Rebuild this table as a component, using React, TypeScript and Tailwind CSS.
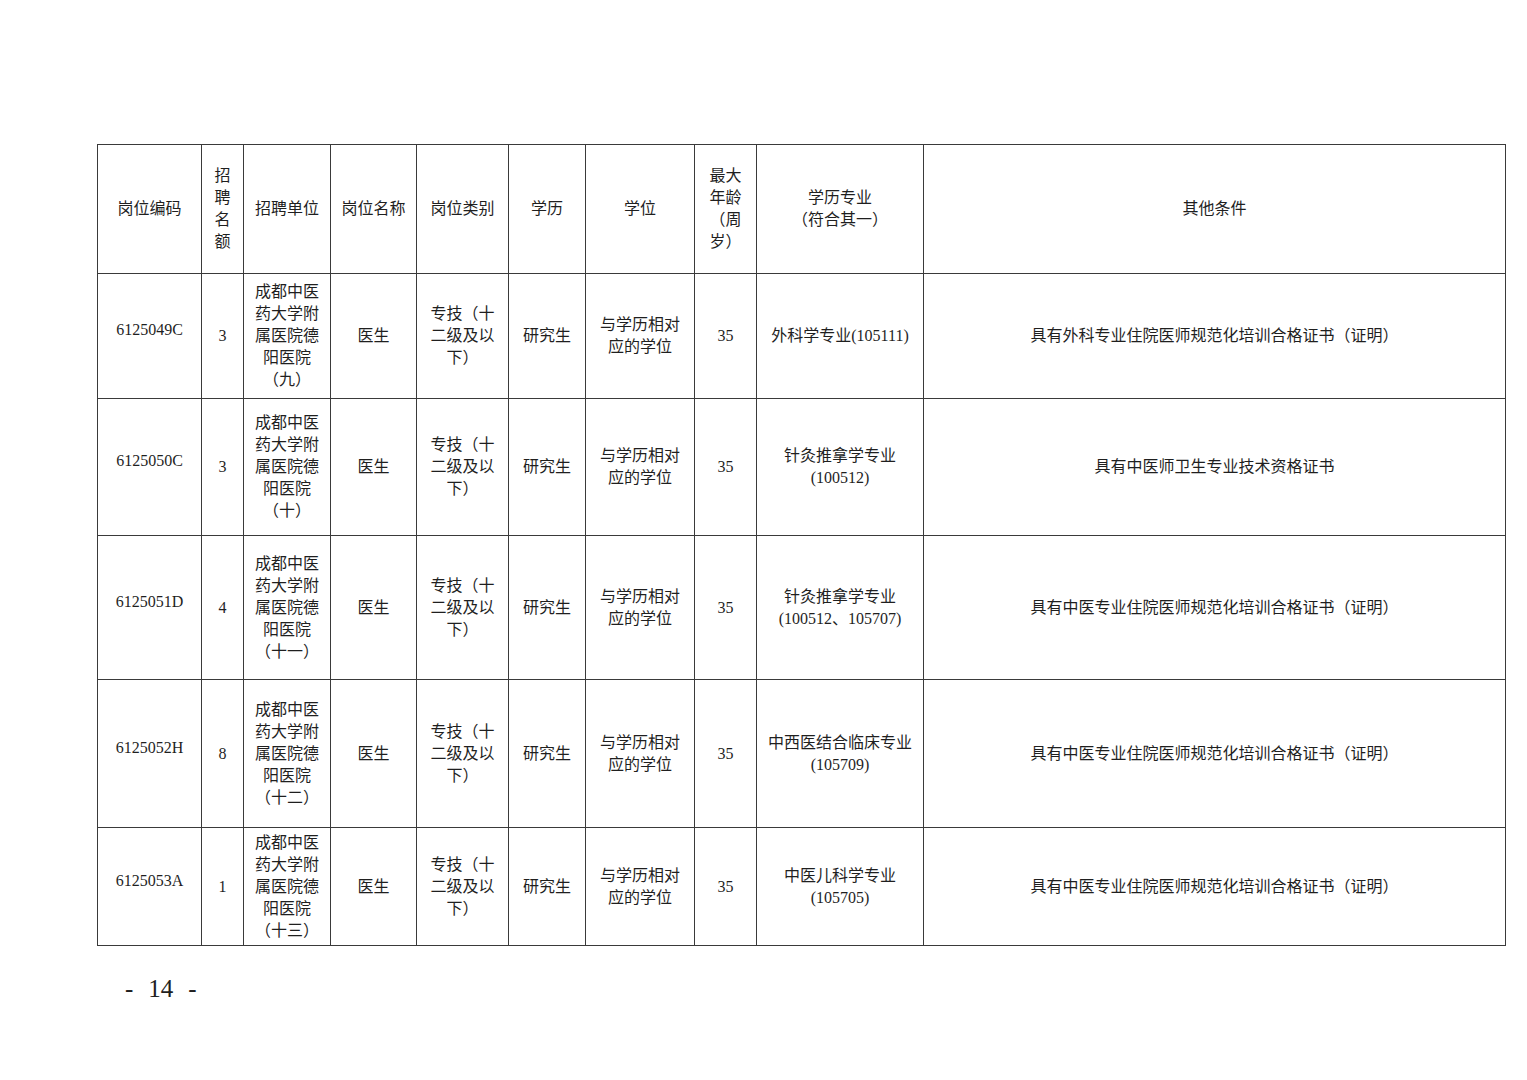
const rows = [
  { code: "6125049C", num: "3", unit: "（九）", major: ["外科学专业(105111)"], other: "具有外科专业住院医师规范化培训合格证书（证明）", h: "h-[125px]" },
  { code: "6125050C", num: "3", unit: "（十）", major: ["针灸推拿学专业", "(100512)"], other: "具有中医师卫生专业技术资格证书", h: "h-[137px]" },
  { code: "6125051D", num: "4", unit: "（十一）", major: ["针灸推拿学专业", "(100512、105707)"], other: "具有中医专业住院医师规范化培训合格证书（证明）", h: "h-[144px]" },
  { code: "6125052H", num: "8", unit: "（十二）", major: ["中西医结合临床专业", "(105709)"], other: "具有中医专业住院医师规范化培训合格证书（证明）", h: "h-[148px]" },
  { code: "6125053A", num: "1", unit: "（十三）", major: ["中医儿科学专业", "(105705)"], other: "具有中医专业住院医师规范化培训合格证书（证明）", h: "h-[118px]" }
];

const cell = "border border-[#3a3a3a] px-1 text-center align-middle";

export default function App() {
  return (
    <div
      className="w-[1527px] h-[1080px] bg-white text-[#1f1f1f] text-[16px] leading-[22px] pt-[144px] pl-[97px]"
      style={{ fontFamily: '"Liberation Serif", "Noto Sans CJK SC", serif' }}
    >
      <table className="table-fixed border-collapse w-[1408px]">
        <colgroup>
          <col className="w-[104px]" />
          <col className="w-[42px]" />
          <col className="w-[87px]" />
          <col className="w-[86px]" />
          <col className="w-[92px]" />
          <col className="w-[77px]" />
          <col className="w-[109px]" />
          <col className="w-[62px]" />
          <col className="w-[167px]" />
          <col className="w-[582px]" />
        </colgroup>
        <thead>
          <tr className="h-[129px]">
            <th className={`${cell} font-normal`}>岗位编码</th>
            <th className={`${cell} font-normal`}>招<br />聘<br />名<br />额</th>
            <th className={`${cell} font-normal`}>招聘单位</th>
            <th className={`${cell} font-normal`}>岗位名称</th>
            <th className={`${cell} font-normal`}>岗位类别</th>
            <th className={`${cell} font-normal`}>学历</th>
            <th className={`${cell} font-normal`}>学位</th>
            <th className={`${cell} font-normal`}>最大<br />年龄<br />（周<br />岁）</th>
            <th className={`${cell} font-normal`}>学历专业<br />（符合其一）</th>
            <th className={`${cell} font-normal`}>其他条件</th>
          </tr>
        </thead>
        <tbody>
          {rows.map((r) => (
            <tr key={r.code} className={r.h}>
              <td className={`${cell} pb-[12px]`}>{r.code}</td>
              <td className={cell}>{r.num}</td>
              <td className={cell}>
                成都中医<br />药大学附<br />属医院德<br />阳医院<br />{r.unit}
              </td>
              <td className={cell}>医生</td>
              <td className={cell}>专技（十<br />二级及以<br />下）</td>
              <td className={cell}>研究生</td>
              <td className={cell}>与学历相对<br />应的学位</td>
              <td className={cell}>35</td>
              <td className={cell}>
                {r.major.map((m, i) => (
                  <div key={i}>{m}</div>
                ))}
              </td>
              <td className={cell}>{r.other}</td>
            </tr>
          ))}
        </tbody>
      </table>
      {/* page number */}
      <div className="mt-[27px] ml-[28px] flex items-center gap-[15px] text-[25px] leading-[32px]">
        <span>-</span>
        <span>14</span>
        <span>-</span>
      </div>
    </div>
  );
}
